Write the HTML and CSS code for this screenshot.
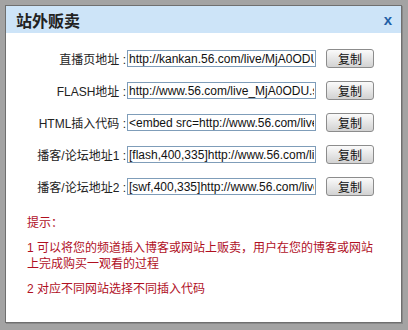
FILE: index.html
```html
<!DOCTYPE html>
<html lang="zh-CN">
<head>
  <meta charset="UTF-8" />
  <title>站外贩卖</title>
  <link rel="stylesheet" href="styles.css">
</head>
<body>
  <div class="backdrop">
    <div class="dialog">
      <div class="dialog-head">
        <span class="dialog-title">站外贩卖</span>
        <span class="dialog-close">x</span>
      </div>
      <div class="dialog-body">
        <div class="row">
          <label class="row-label">直播页地址 :</label>
          <input class="row-input" type="text" value="http://kankan.56.com/live/MjA0ODU0Mg==" readonly>
          <button class="btn">复制</button>
        </div>
        <div class="row">
          <label class="row-label">FLASH地址 :</label>
          <input class="row-input" type="text" value="http://www.56.com/live_MjA0ODU.swf" readonly>
          <button class="btn">复制</button>
        </div>
        <div class="row">
          <label class="row-label">HTML插入代码 :</label>
          <input class="row-input" type="text" value="&lt;embed src=http://www.56.com/live_MjA0ODU.swf" readonly>
          <button class="btn">复制</button>
        </div>
        <div class="row">
          <label class="row-label">播客/论坛地址1 :</label>
          <input class="row-input" type="text" value="[flash,400,335]http://www.56.com/live_MjA0ODU.swf" readonly>
          <button class="btn">复制</button>
        </div>
        <div class="row">
          <label class="row-label">播客/论坛地址2 :</label>
          <input class="row-input" type="text" value="[swf,400,335]http://www.56.com/live_MjA0ODU.swf" readonly>
          <button class="btn">复制</button>
        </div>

        <div class="tips">
          <p class="tips-title">提示：</p>
          <p>1 可以将您的频道插入博客或网站上贩卖，用户在您的博客或网站上完成购买一观看的过程</p>
          <p>2 对应不同网站选择不同插入代码</p>
        </div>
      </div>
    </div>
  </div>
</body>
</html>
```

FILE: styles.css
```css
body {
  margin: 0;
  background: #a3a3a3;
  font-family: "Liberation Sans", Arial, "Noto Sans CJK SC", sans-serif;
  font-size: 12px;
}

.backdrop {
  padding: 5px 6px 7px 5px;
}

.dialog {
  width: 395px;
  height: 316px;
  background: #fff;
  border: 1px solid #6f6f6f;
  box-shadow: 1px 1px 0 #8a8a8a;
}

.dialog-head {
  height: 27px;
  background: #cde4f8;
  display: flex;
  align-items: center;
  justify-content: space-between;
  padding: 0 9px 0 10px;
}

.dialog-title {
  font-family: "Noto Sans CJK SC", sans-serif;
  font-size: 16px;
  font-weight: bold;
  color: #222;
}

.dialog-close {
  font-family: "Liberation Sans", Arial, sans-serif;
  font-size: 15px;
  font-weight: bold;
  color: #1f5fa6;
  margin-top: -1px;
}

.dialog-body {
  padding-top: 16px;
}

.row {
  display: flex;
  align-items: center;
  height: 19px;
  margin-bottom: 13px;
}

.row-label {
  width: 120px;
  text-align: right;
  color: #222;
  font-family: "Liberation Sans", Arial, "Noto Sans CJK SC", sans-serif;
  white-space: nowrap;
}

.row-input {
  width: 185px;
  height: 15px;
  margin: 0 0 0 1px;
  padding: 0 1px;
  border: 1px solid #7f9db9;
  font-family: "Liberation Sans", Arial, sans-serif;
  font-size: 12px;
  color: #111;
  outline: none;
}

.btn {
  margin-left: 10px;
  width: 48px;
  height: 19px;
  padding: 0;
  border: 1px solid #8c8c8c;
  border-radius: 3px;
  background: linear-gradient(#fbfbfb, #e2e2e2 60%, #d2d2d2);
  font-family: "Noto Sans CJK SC", sans-serif;
  font-size: 12px;
  color: #111;
  line-height: 17px;
}

.tips {
  padding: 6px 20px 0 21px;
  color: #b0101f;
  font-family: "Liberation Sans", Arial, "Noto Sans CJK SC", sans-serif;
  font-size: 12px;
  line-height: 16px;
}

.tips p {
  margin: 0 0 9px;
}

.tips-title {
  margin-bottom: 9px;
}
```
